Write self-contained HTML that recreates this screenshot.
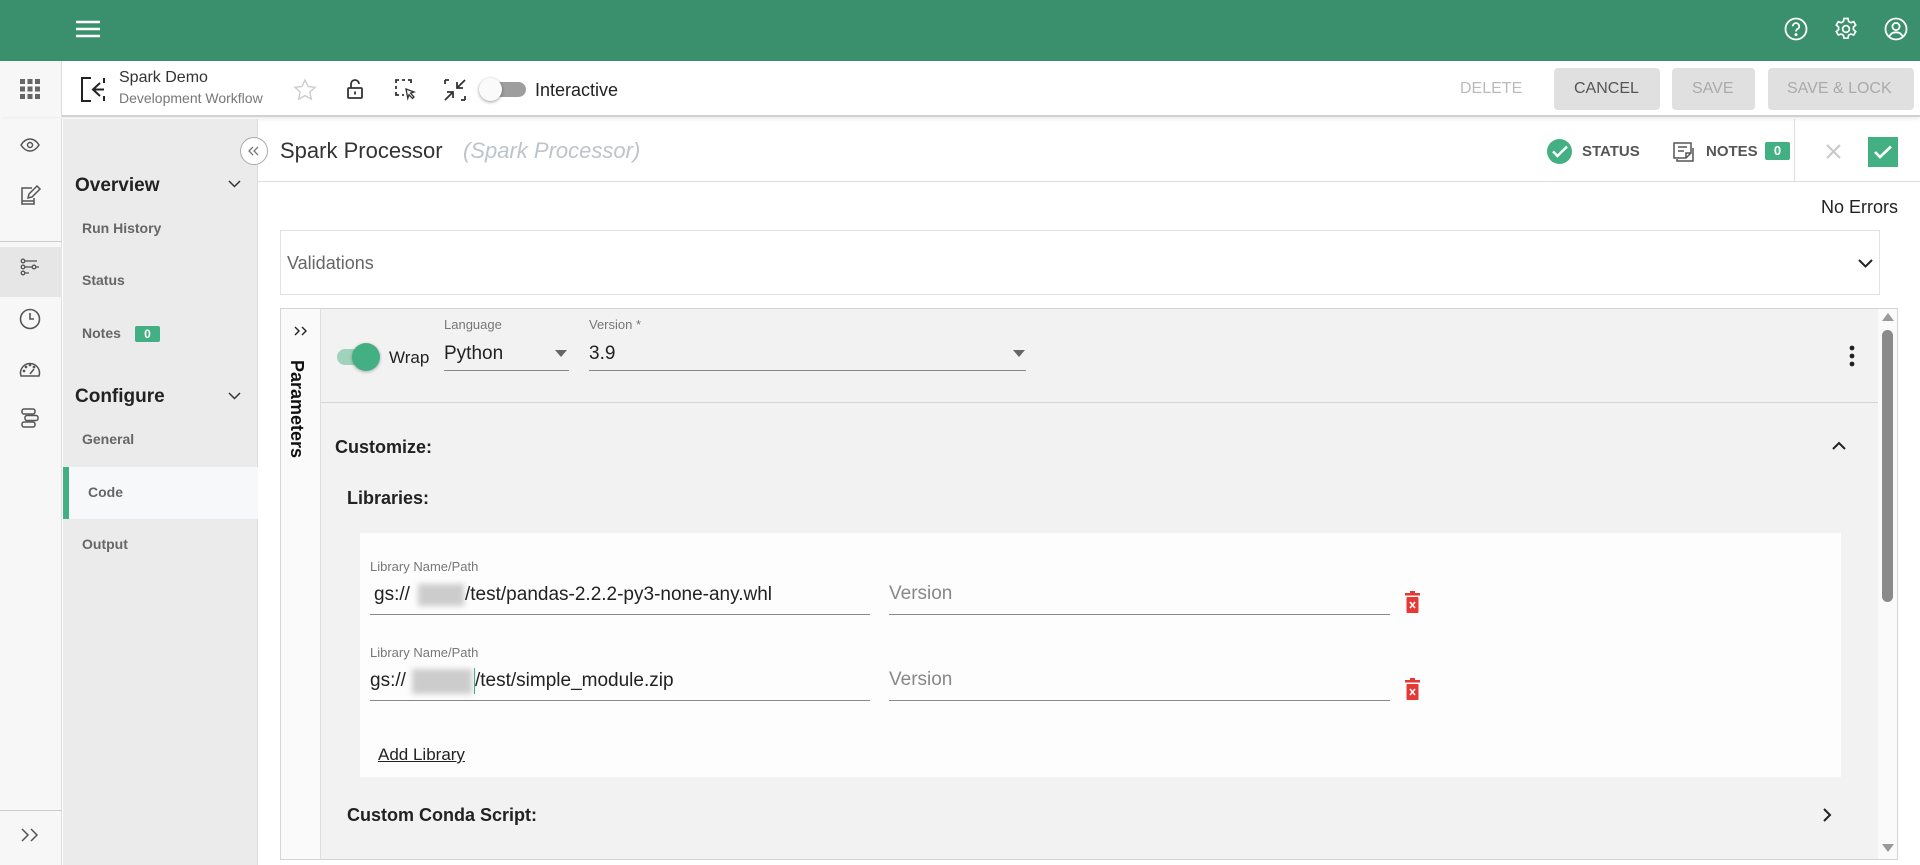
<!DOCTYPE html>
<html><head><meta charset="utf-8"><style>
*{box-sizing:border-box;margin:0;padding:0}
body{width:1920px;height:865px;overflow:hidden;position:relative;background:#fff;font-family:"Liberation Sans",sans-serif;color:#222}
.a{position:absolute}
.t{position:absolute;white-space:nowrap;line-height:1}
svg{position:absolute;overflow:visible}
</style></head><body>
<!-- top bar -->
<div class="a" style="left:0;top:0;width:1920px;height:61px;background:#3a8f6d"></div>
<svg style="left:76px;top:20px" width="24" height="18"><path d="M0 2h24M0 9h24M0 16h24" stroke="#fff" stroke-width="2.6"/></svg>
<svg style="left:1784px;top:17px" width="24" height="24" fill="none" stroke="#fff" stroke-width="1.8"><circle cx="12" cy="12" r="10.5"/><path d="M8.8 9.3a3.2 3.2 0 1 1 4.6 2.9c-1 .5-1.4 1.2-1.4 2.3"/><circle cx="12" cy="17.6" r=".6" fill="#fff"/></svg>
<svg style="left:1834px;top:17px" width="24" height="24" fill="none" stroke="#fff" stroke-width="1.7"><circle cx="12" cy="12" r="3.4"/><path d="M10 1.5h4l.6 3 2.2 1.2 2.9-1 2 3.4-2.3 2v2.5l2.3 2-2 3.4-2.9-1-2.2 1.2-.6 3h-4l-.6-3-2.2-1.2-2.9 1-2-3.4 2.3-2v-2.5l-2.3-2 2-3.4 2.9 1L9.4 4.5z"/></svg>
<svg style="left:1884px;top:17px" width="24" height="24" fill="none" stroke="#fff" stroke-width="1.8"><circle cx="12" cy="12" r="10.5"/><circle cx="12" cy="9.5" r="3.6"/><path d="M5.2 19.5c1.5-3 4-4.2 6.8-4.2s5.3 1.2 6.8 4.2"/></svg>
<!-- second bar -->
<div class="a" style="left:0;top:61px;width:1920px;height:56px;background:#fff;border-bottom:2px solid #cfd2d5;box-shadow:0 2px 4px rgba(0,0,0,.08)"></div>
<div class="a" style="left:0;top:61px;width:62px;height:56px;background:#f7f7f7;border-right:1px solid #ddd"></div>
<svg style="left:20px;top:79px" width="20" height="20" fill="#666"><rect x="0" y="0" width="5" height="5"/><rect x="7.5" y="0" width="5" height="5"/><rect x="15" y="0" width="5" height="5"/><rect x="0" y="7.5" width="5" height="5"/><rect x="7.5" y="7.5" width="5" height="5"/><rect x="15" y="7.5" width="5" height="5"/><rect x="0" y="15" width="5" height="5"/><rect x="7.5" y="15" width="5" height="5"/><rect x="15" y="15" width="5" height="5"/></svg>
<svg style="left:81px;top:77px" width="24" height="25" fill="none" stroke="#222" stroke-width="2"><path d="M10 1H1v23h9M23 1v5M23 19v5M19 6l-7 6.5 7 6.5M12 12.5h11"/></svg>
<div class="t" style="left:119px;top:70px;font-size:16px;color:#333">Spark Demo</div>
<div class="t" style="left:119px;top:91px;font-size:14px;color:#777">Development Workflow</div>
<svg style="left:294px;top:79px" width="22" height="21" fill="none" stroke="#ccc" stroke-width="1.4"><path d="M11 1l3 6.5 7 .8-5.2 4.8 1.5 7L11 16.6 4.7 20.1l1.5-7L1 8.3l7-.8z"/></svg>
<svg style="left:347px;top:79px" width="16" height="20" fill="none" stroke="#333" stroke-width="1.8"><rect x="1" y="9" width="14" height="10" rx="1"/><path d="M4 9V5a4 4 0 0 1 8 0"/><path d="M8 12.5v3"/></svg>
<svg style="left:395px;top:79px" width="22" height="22" fill="none" stroke="#333" stroke-width="1.8"><path d="M1 4V1h3M7 1h3M13 1h3v3M1 7v3M1 13v3h3M7 16h2"/><path d="M11 10l8 3-3.5 1.2L19 18l-1.5 1.5-3.5-3.7-1.2 3.5z" stroke-width="1.3"/></svg>
<svg style="left:444px;top:79px" width="22" height="22" fill="none" stroke="#333" stroke-width="1.8"><path d="M21 1l-8 8M13 3v6h6M1 21l8-8M9 19v-6H3M1 1v4M1 1h4M21 21v-4M21 21h-4"/></svg>
<div class="a" style="left:486px;top:82px;width:40px;height:15px;border-radius:8px;background:#9e9e9e"></div>
<div class="a" style="left:479px;top:78px;width:23px;height:23px;border-radius:50%;background:#fafafa;box-shadow:0 1px 3px rgba(0,0,0,.4)"></div>
<div class="t" style="left:535px;top:81px;font-size:18px;color:#222">Interactive</div>
<div class="t" style="left:1460px;top:81px;font-size:16px;color:#bbb">DELETE</div>
<div class="a" style="left:1554px;top:68px;width:106px;height:42px;border-radius:4px;background:#e0e0e0"></div>
<div class="t" style="left:1574px;top:81px;font-size:16px;color:#555">CANCEL</div>
<div class="a" style="left:1672px;top:68px;width:83px;height:42px;border-radius:4px;background:#e0e0e0"></div>
<div class="t" style="left:1692px;top:81px;font-size:16px;color:#aaa">SAVE</div>
<div class="a" style="left:1768px;top:68px;width:146px;height:42px;border-radius:4px;background:#e0e0e0"></div>
<div class="t" style="left:1787px;top:81px;font-size:16px;color:#aaa">SAVE &amp; LOCK</div>
<!-- left rail -->
<div class="a" style="left:0;top:119px;width:62px;height:746px;background:#f7f7f7;border-right:1px solid #ddd"></div>
<div class="a" style="left:0;top:241px;width:62px;height:1px;background:#ccc"></div>
<div class="a" style="left:0;top:247px;width:62px;height:50px;background:#e6e6e6"></div>
<div class="a" style="left:0;top:810px;width:62px;height:1px;background:#ccc"></div>
<svg style="left:20px;top:138px" width="20" height="14" fill="none" stroke="#555" stroke-width="1.5"><path d="M1 7c2.5-4 5.5-6 9-6s6.5 2 9 6c-2.5 4-5.5 6-9 6S3.5 11 1 7z"/><circle cx="10" cy="7" r="2.5"/></svg>
<svg style="left:20px;top:185px" width="20" height="20" fill="none" stroke="#555" stroke-width="1.5"><path d="M12 3H2v16h12v-6M8 13l1-4 8-8 3 3-8 8zM2 16h12"/></svg>
<svg style="left:20px;top:259px" width="20" height="16" fill="none" stroke="#555" stroke-width="1.3"><circle cx="3" cy="2" r="1.8"/><path d="M5 2h12"/><circle cx="3" cy="8" r="1.8"/><path d="M5 8h7"/><circle cx="14" cy="8" r="1.8"/><circle cx="3" cy="14" r="1.8"/><path d="M5 14h4M16 8h3"/></svg>
<svg style="left:19px;top:308px" width="22" height="22" fill="none" stroke="#555" stroke-width="1.6"><circle cx="11" cy="11" r="9.5"/><path d="M11 5v6h4"/></svg>
<svg style="left:19px;top:361px" width="22" height="16" fill="none" stroke="#555" stroke-width="1.5"><path d="M2 15a9.5 9.5 0 1 1 18 0zM11 13l4-5"/><circle cx="5" cy="10" r=".6"/><circle cx="7" cy="6" r=".6"/><circle cx="11" cy="4" r=".6"/><circle cx="15" cy="6" r=".6"/></svg>
<svg style="left:21px;top:408px" width="18" height="20" fill="none" stroke="#555" stroke-width="1.5"><rect x="1" y="1" width="13" height="5" rx="2"/><rect x="4" y="7.5" width="13" height="5" rx="2"/><rect x="1" y="14" width="13" height="5" rx="2"/></svg>
<svg style="left:20px;top:828px" width="20" height="14" fill="none" stroke="#555" stroke-width="1.5"><path d="M2 1l6 6-6 6M11 1l6 6-6 6"/></svg>
<!-- sidebar -->
<div class="a" style="left:63px;top:119px;width:195px;height:746px;background:#ebebeb;border-right:1px solid #ddd"></div>
<div class="t" style="left:75px;top:176px;font-size:19px;font-weight:bold;color:#222">Overview</div>
<svg style="left:228px;top:180px" width="13" height="8" fill="none" stroke="#333" stroke-width="1.5"><path d="M1 1l5.5 5.5L12 1"/></svg>
<div class="t" style="left:82px;top:221px;font-size:14px;font-weight:bold;color:#666">Run History</div>
<div class="t" style="left:82px;top:273px;font-size:14px;font-weight:bold;color:#666">Status</div>
<div class="t" style="left:82px;top:326px;font-size:14px;font-weight:bold;color:#666">Notes</div>
<div class="a" style="left:135px;top:326px;width:25px;height:16px;border-radius:2px;background:#43b083;color:#fff;font-size:12px;font-weight:bold;text-align:center;line-height:16px">0</div>
<div class="t" style="left:75px;top:387px;font-size:19px;font-weight:bold;color:#222">Configure</div>
<svg style="left:228px;top:392px" width="13" height="8" fill="none" stroke="#333" stroke-width="1.5"><path d="M1 1l5.5 5.5L12 1"/></svg>
<div class="t" style="left:82px;top:432px;font-size:14px;font-weight:bold;color:#666">General</div>
<div class="a" style="left:63px;top:467px;width:195px;height:52px;background:#f7f8fa"></div>
<div class="a" style="left:63px;top:467px;width:6px;height:52px;background:#43b083"></div>
<div class="t" style="left:88px;top:485px;font-size:14px;font-weight:bold;color:#666">Code</div>
<div class="t" style="left:82px;top:537px;font-size:14px;font-weight:bold;color:#666">Output</div>
<div class="a" style="left:240px;top:137px;width:28px;height:28px;border-radius:50%;border:1.5px solid #aaa;background:#fff"></div>
<svg style="left:247px;top:146px" width="14" height="10" fill="none" stroke="#777" stroke-width="1.3"><path d="M6 1L2 5l4 4M11 1L7 5l4 4"/></svg>
<!-- content header -->
<div class="a" style="left:258px;top:181px;width:1662px;height:1px;background:#ddd"></div>
<div class="a" style="left:1794px;top:119px;width:1px;height:62px;background:#ddd"></div>
<div class="t" style="left:280px;top:140px;font-size:22px;color:#333">Spark Processor</div>
<div class="t" style="left:463px;top:140px;font-size:22px;color:#bcc4cc;font-style:italic">(Spark Processor)</div>
<div class="a" style="left:1547px;top:139px;width:25px;height:25px;border-radius:50%;background:#43b083"></div>
<svg style="left:1552px;top:145px" width="16" height="13" fill="none" stroke="#fff" stroke-width="2.4"><path d="M1 6.5l4.5 4.5L15 1.5"/></svg>
<div class="t" style="left:1582px;top:144px;font-size:15px;font-weight:bold;color:#555">STATUS</div>
<svg style="left:1673px;top:142px" width="22" height="20" fill="none" stroke="#555" stroke-width="1.5"><path d="M1 1h17v10l-5 5H1zM13 16v-5h5M5 5h9M5 9h6M4 17v2h16V6"/></svg>
<div class="t" style="left:1706px;top:144px;font-size:15px;font-weight:bold;color:#555">NOTES</div>
<div class="a" style="left:1765px;top:142px;width:25px;height:18px;border-radius:2px;background:#43b083;color:#fff;font-size:13px;font-weight:bold;text-align:center;line-height:18px">0</div>
<svg style="left:1826px;top:144px" width="15" height="15" stroke="#c8c8c8" stroke-width="2"><path d="M1 1l13 13M14 1L1 14"/></svg>
<div class="a" style="left:1868px;top:137px;width:30px;height:30px;background:#43b083"></div>
<svg style="left:1874px;top:145px" width="18" height="14" fill="none" stroke="#fff" stroke-width="2.6"><path d="M1 7l5 5L17 1.5"/></svg>
<div class="t" style="right:22px;top:198px;font-size:18px;color:#222">No Errors</div>
<!-- validations -->
<div class="a" style="left:280px;top:230px;width:1600px;height:65px;border:1px solid #e2e2e2;background:#fff"></div>
<div class="t" style="left:287px;top:254px;font-size:18px;color:#666">Validations</div>
<svg style="left:1858px;top:259px" width="15" height="9" fill="none" stroke="#222" stroke-width="2"><path d="M1 1l6.5 6.5L14 1"/></svg>
<!-- parameters panel -->
<div class="a" style="left:280px;top:308px;width:1618px;height:552px;border:1px solid #d5d5d5;background:#f2f2f2"></div>
<div class="a" style="left:281px;top:309px;width:40px;height:550px;background:#fafafa;border-right:1px solid #ddd"></div>
<svg style="left:294px;top:326px" width="14" height="10" fill="none" stroke="#222" stroke-width="1.4"><path d="M1 1l4 4-4 4M8 1l4 4-4 4"/></svg>
<div class="t" style="left:288px;top:360px;font-size:18px;font-weight:bold;color:#111;writing-mode:vertical-rl">Parameters</div>
<div class="a" style="left:321px;top:402px;width:1557px;height:1px;background:#d5d5d5"></div>
<div class="a" style="left:337px;top:349px;width:40px;height:16px;border-radius:8px;background:#9fd3bb"></div>
<div class="a" style="left:352px;top:343px;width:28px;height:28px;border-radius:50%;background:#43b083;box-shadow:0 1px 3px rgba(0,0,0,.3)"></div>
<div class="t" style="left:389px;top:349px;font-size:17px;color:#222">Wrap</div>
<div class="t" style="left:444px;top:318px;font-size:13px;color:#777">Language</div>
<div class="t" style="left:444px;top:344px;font-size:19px;color:#222">Python</div>
<div class="a" style="left:444px;top:370px;width:125px;height:1px;background:#888"></div>
<svg style="left:555px;top:350px" width="12" height="7" fill="#666"><path d="M0 0h12L6 7z"/></svg>
<div class="t" style="left:589px;top:318px;font-size:13px;color:#777">Version *</div>
<div class="t" style="left:589px;top:344px;font-size:19px;color:#222">3.9</div>
<div class="a" style="left:589px;top:370px;width:437px;height:1px;background:#888"></div>
<svg style="left:1013px;top:350px" width="12" height="7" fill="#666"><path d="M0 0h12L6 7z"/></svg>
<svg style="left:1849px;top:345px" width="6" height="22" fill="#222"><circle cx="3" cy="3" r="2.4"/><circle cx="3" cy="11" r="2.4"/><circle cx="3" cy="19" r="2.4"/></svg>
<div class="t" style="left:335px;top:438px;font-size:18px;font-weight:bold;color:#222">Customize:</div>
<svg style="left:1832px;top:441px" width="14" height="9" fill="none" stroke="#222" stroke-width="2"><path d="M1 8l6-6 6 6"/></svg>
<div class="t" style="left:347px;top:489px;font-size:18px;font-weight:bold;color:#222">Libraries:</div>
<div class="a" style="left:360px;top:533px;width:1481px;height:244px;background:#fdfdfd"></div>
<div class="t" style="left:370px;top:560px;font-size:13px;color:#777">Library Name/Path</div>
<div class="t" style="left:374px;top:585px;font-size:19px;color:#222">gs://</div>
<div class="a" style="left:418px;top:584px;width:46px;height:22px;background:#ccc;filter:blur(3px)"></div>
<div class="t" style="left:465px;top:585px;font-size:19px;color:#222">/test/pandas-2.2.2-py3-none-any.whl</div>
<div class="a" style="left:370px;top:614px;width:500px;height:1px;background:#888"></div>
<div class="t" style="left:889px;top:584px;font-size:19px;color:#888">Version</div>
<div class="a" style="left:889px;top:614px;width:501px;height:1px;background:#888"></div>
<svg style="left:1405px;top:591px" width="15" height="22"><rect x="0" y="2" width="15" height="2.5" fill="#e53935"/><rect x="5" y="0" width="5" height="3" fill="#e53935"/><rect x="1.5" y="6" width="12" height="16" rx="1" fill="#e53935"/><path d="M5 11l5 6M10 11l-5 6" stroke="#fff" stroke-width="1.6"/></svg>
<div class="t" style="left:370px;top:646px;font-size:13px;color:#777">Library Name/Path</div>
<div class="t" style="left:370px;top:671px;font-size:19px;color:#222">gs://</div>
<div class="a" style="left:412px;top:669px;width:60px;height:25px;background:#ccc;filter:blur(3px)"></div>
<div class="a" style="left:474px;top:668px;width:1px;height:26px;background:#43b083"></div>
<div class="t" style="left:475px;top:671px;font-size:19px;color:#222">/test/simple_module.zip</div>
<div class="a" style="left:370px;top:700px;width:500px;height:1px;background:#888"></div>
<div class="t" style="left:889px;top:670px;font-size:19px;color:#888">Version</div>
<div class="a" style="left:889px;top:700px;width:501px;height:1px;background:#888"></div>
<svg style="left:1405px;top:678px" width="15" height="22"><rect x="0" y="2" width="15" height="2.5" fill="#e53935"/><rect x="5" y="0" width="5" height="3" fill="#e53935"/><rect x="1.5" y="6" width="12" height="16" rx="1" fill="#e53935"/><path d="M5 11l5 6M10 11l-5 6" stroke="#fff" stroke-width="1.6"/></svg>
<div class="t" style="left:378px;top:746px;font-size:17px;color:#222;text-decoration:underline">Add Library</div>
<div class="t" style="left:347px;top:806px;font-size:18px;font-weight:bold;color:#222">Custom Conda Script:</div>
<svg style="left:1823px;top:808px" width="9" height="14" fill="none" stroke="#222" stroke-width="2"><path d="M1 1l6 6-6 6"/></svg>
<!-- scrollbar -->
<div class="a" style="left:1878px;top:309px;width:19px;height:550px;background:#fafafa"></div>
<svg style="left:1882px;top:313px" width="12" height="8" fill="#999"><path d="M0 8L6 0l6 8z"/></svg>
<div class="a" style="left:1882px;top:330px;width:11px;height:272px;border-radius:6px;background:#8a8a8a"></div>
<svg style="left:1882px;top:844px" width="12" height="8" fill="#999"><path d="M0 0h12L6 8z"/></svg>
</body></html>
